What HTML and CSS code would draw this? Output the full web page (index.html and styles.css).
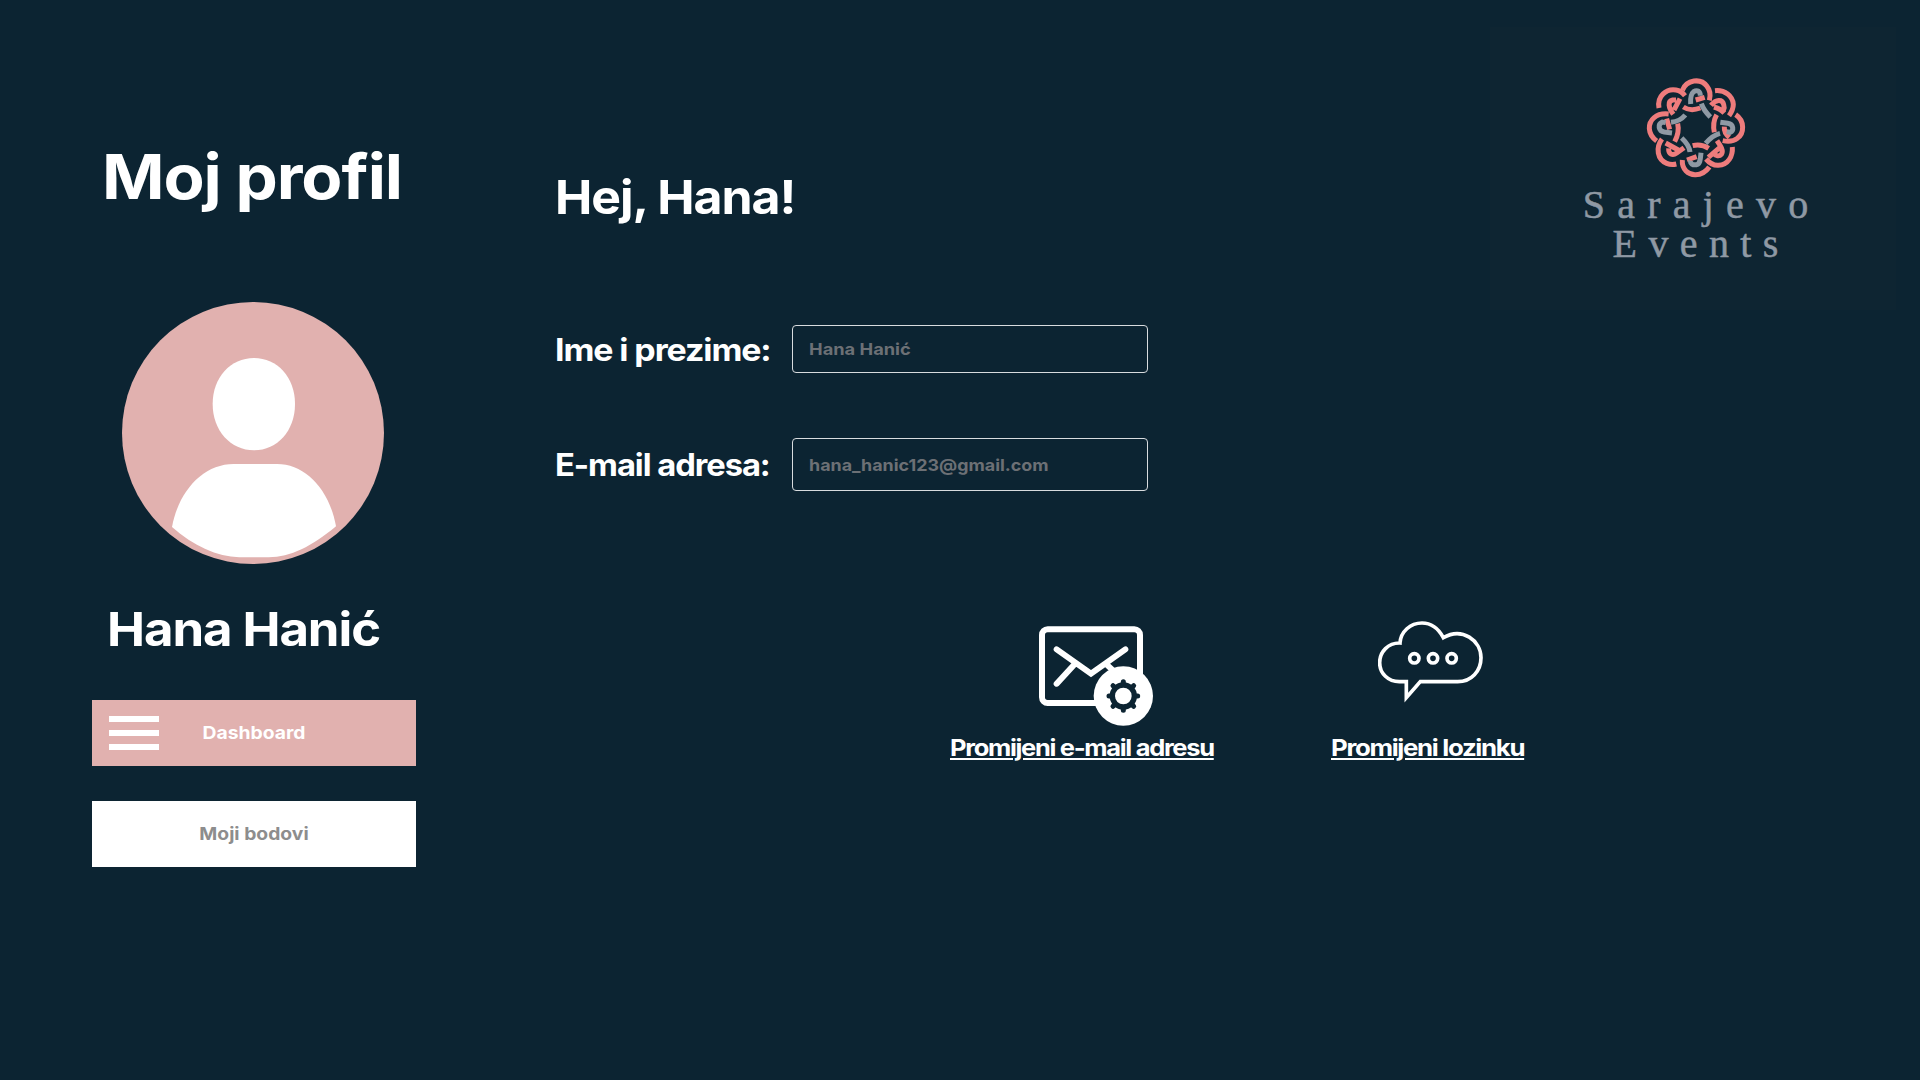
FILE: index.html
```html
<!DOCTYPE html>
<html lang="bs">
<head>
<meta charset="utf-8">
<title>Moj profil – Sarajevo Events</title>
<link rel="stylesheet" href="styles.css">
</head>
<body>
<div class="page">
  <aside class="sidebar">
    <h1 class="title"><span class="wide title-text">Moj profil</span></h1>
    <svg class="avatar" viewBox="0 0 786 786">
      <circle cx="393" cy="393" r="393" fill="#e1b1af"/>
      <path fill="#fff" d="M396 168C466 168 519 226 519 306C519 386 466 445 396 445C326 445 272 386 272 306C272 226 326 168 396 168Z"/>
      <path fill="#fff" d="M150 675C170 565 245 486 335 486H465C550 486 622 562 642 673C570 733 505 766 440 766H352C285 764 215 732 150 675Z"/>
    </svg>
    <h2 class="name"><span class="wide name-text">Hana Hanić</span></h2>
    <nav class="menu">
      <a class="item active">
        <svg class="burger" viewBox="0 0 50 34"><path d="M0 3H50M0 17H50M0 31H50" stroke="#fff" stroke-width="6"/></svg>
        <span class="item-text">Dashboard</span>
      </a>
      <a class="item"><span class="item-text">Moji bodovi</span></a>
    </nav>
  </aside>

  <main class="content">
    <h2 class="greeting"><span class="wide greeting-text">Hej, Hana!</span></h2>
    <form class="form">
      <label class="row">
        <span class="label"><span class="wide label-name">Ime i prezime:</span></span>
        <span class="field"><span class="wide value-name">Hana Hanić</span></span>
      </label>
      <label class="row row-mail">
        <span class="label"><span class="wide label-mail">E-mail adresa:</span></span>
        <span class="field"><span class="wide value-mail">hana_hanic123@gmail.com</span></span>
      </label>
    </form>
    <div class="actions">
      <a class="action mail">
        <svg class="icon-mail" viewBox="57 47 342 300" fill="none" stroke="#fff" stroke-linecap="round">
          <rect x="66" y="57" width="294" height="221" rx="17" stroke-width="18"/>
          <path d="M110 117L213 190L316 117M165 160L110 220M257 160L300 200" stroke-width="18"/>
          <circle cx="310" cy="257" r="89" fill="#fff" stroke="none"/>
          <g stroke="#0c2432">
            <circle cx="310" cy="257" r="33" stroke-width="16"/>
            <path d="M310 217V214M310 297V300M270 257H267M350 257H353M281 228L279 226M339 228L341 226M281 286L279 288M339 286L341 288" stroke-width="15"/>
          </g>
        </svg>
        <span class="wide link-mail">Promijeni e-mail adresu</span>
      </a>
      <a class="action pass">
        <svg class="icon-chat" viewBox="53 47 315 246" fill="none" stroke="#fff">
          <path d="M138 229V277L180 229H292C333 229 362 197 362 157C362 106 306 64 249 97C233 67 210 53 185 53C150 53 121 79 119 113C84 112 58 139 58 172C58 205 84 229 117 229Z" stroke-width="11"/>
          <g stroke-width="11"><circle cx="162" cy="159" r="14"/><circle cx="218" cy="159" r="14"/><circle cx="274" cy="159" r="14"/></g>
        </svg>
        <span class="wide link-pass">Promijeni lozinku</span>
      </a>
    </div>
  </main>

  <div class="brand">
    <svg class="knot" viewBox="45 38 306 306" fill="none" stroke-width="15">
      <g stroke="#ee7c7c">
        <path d="M157 78C170 46 212 40 231 66C240 77 243 90 238 108"/>
        <path d="M87 131C80 95 110 72 138 77C150 79 158 85 165 94"/>
        <path d="M255 79C285 76 308 95 310 120C310 132 306 142 297 154"/>
        <path d="M116 149C78 145 57 168 58 193C59 210 69 222 80 230"/>
        <path d="M317 151C345 170 343 207 322 222C311 231 293 232 278 229"/>
        <path d="M96 224C76 250 82 286 110 297C120 301 130 301 139 299"/>
        <path d="M307 248C309 275 295 302 265 303C250 304 240 298 228 284"/>
        <path d="M157 287C155 315 175 332 197 331C215 331 228 322 238 308"/>
        <path d="M197 107L224 99M160 128C175 138 195 137 211 131"/>
        <path d="M243 123C258 104 277 104 281 120C284 128 283 133 280 139M252 128C265 132 275 137 283 146"/>
        <path d="M260 151C252 165 249 185 253 204M283 187C282 200 288 211 298 219"/>
        <path d="M261 229C272 245 282 260 274 270C268 277 256 275 252 267M269 250L235 279"/>
        <path d="M188 244C205 240 225 245 236 252M171 287L200 277"/>
        <path d="M162 250L140 266C128 275 115 270 116 252M107 236L145 257"/>
        <path d="M143 178C147 195 143 215 134 232M110 163L119 195"/>
        <path d="M130 150C115 130 112 110 128 107L138 107M150 103L132 137"/>
      </g>
      <g stroke="#8f99a4">
        <path d="M182 119C181 105 183 88 191 82C202 75 211 81 211 94"/>
        <path d="M214 118C220 135 228 145 241 158"/>
        <path d="M271 174L293 177C312 180 312 199 300 204L290 202"/>
        <path d="M270 207C250 212 240 222 227 237"/>
        <path d="M213 265C211 285 211 298 200 301C188 303 180 298 182 289"/>
        <path d="M155 221C170 235 178 245 180 263"/>
        <path d="M126 206L103 203C85 200 82 180 97 173L107 175"/>
        <path d="M166 152C155 165 140 172 123 174"/>
      </g>
    </svg>
    <span class="brand-top">Sarajevo</span>
    <span class="brand-bottom">Events</span>
  </div>
</div>
</body>
</html>
```
FILE: styles.css
```css
* { box-sizing: border-box; }
body {
  margin: 0;
  background: #0c2432;
  color: #fff;
  font-family: Inter, "Open Sans", sans-serif;
  font-weight: 700;
}
.page {
  display: grid;
  grid-template-columns: 324px 1074px 406px;
  width: 1920px;
  height: 1080px;
  padding-left: 92px;
  overflow: hidden;
}
h1, h2 { margin: 0; white-space: nowrap; }
svg { display: block; }

/* Inter stretched to a broader, geometric width */
.wide { display: inline-block; align-self: flex-start; transform-origin: 0 50%; }
.field .wide { align-self: center; }
.title-text { transform: scaleX(1.083); }
.name-text { transform: scaleX(1.083); }
.greeting-text { transform: scaleX(1.063); }
.label-name { transform: scaleX(1.094); }
.label-mail { transform: scaleX(1.056); }
.value-name { transform: scaleX(1.1); }
.value-mail { transform: scaleX(1.077); }
.item-text { transform: scaleX(1.072); }

.sidebar { display: flex; flex-direction: column; padding-top: 137px; }
.title { padding-left: 10px; font-size: 62px; line-height: 80px; letter-spacing: -1px; }
.avatar { width: 262px; height: 262px; margin: 85px 0 0 30px; }
.name { margin-top: 35px; padding-left: 15px; font-size: 47px; line-height: 60px; letter-spacing: -1px; }
.menu { display: flex; flex-direction: column; gap: 35px; margin-top: 41px; }
.item {
  display: grid;
  grid-template-columns: 1fr;
  place-items: center;
  height: 66px;
  background: #fff;
  color: #8d8d8d;
  font-size: 18px;
  line-height: 22px;
}
.item > * { grid-area: 1 / 1; }
.active { background: #e1b1af; color: #fff; }
.burger { width: 50px; height: 34px; justify-self: start; margin-left: 17px; }

.content { padding: 167px 0 0 139px; }
.greeting { font-size: 47px; line-height: 60px; letter-spacing: -1px; }
.form { margin-top: 98px; }
.row { display: flex; align-items: center; height: 48px; }
.row-mail { height: 53px; margin-top: 65px; }
.label { width: 237px; font-size: 31px; letter-spacing: -1px; white-space: nowrap; }
.field {
  display: flex;
  align-items: center;
  width: 356px;
  height: 100%;
  padding-left: 16px;
  border: 1px solid #d9dcdf;
  border-radius: 4px;
  color: #6c7075;
  font-size: 16.6px;
}
.actions {
  display: flex;
  gap: 118px;
  margin: 130px 0 0 395px;
  font-size: 23.3px;
  line-height: 30px;
}
.action {
  display: flex;
  flex: none;
  flex-direction: column;
  letter-spacing: -1.2px;
  white-space: nowrap;
}
.mail { width: 263px; padding-top: 5px; }
.icon-mail { width: 114px; height: 100px; margin-left: 89px; }
.icon-chat { width: 105px; height: 82px; margin-left: 47px; }
.link-mail, .link-pass {
  text-decoration: underline;
  text-decoration-thickness: 2px;
  text-underline-offset: 2px;
}
.link-mail { margin-top: 7px; transform: scaleX(1.094); }
.link-pass { margin-top: 30px; transform: scaleX(1.108); }

.brand {
  display: flex;
  flex-direction: column;
  align-items: center;
  height: 283px;
  margin-top: 27px;
  padding: 50px 0 0 5px;
  background: #0e2532;
  color: #8f99a4;
  font-family: "Liberation Serif", serif;
  font-weight: 400;
  font-size: 40px;
  line-height: 39px;
  -webkit-text-stroke: 0.5px #8f99a4;
}
.knot { width: 102px; height: 102px; margin-bottom: 6px; }
.brand-top { margin-right: -12.2px; letter-spacing: 12.2px; }
.brand-bottom { margin-right: -11.4px; letter-spacing: 11.4px; }
```
